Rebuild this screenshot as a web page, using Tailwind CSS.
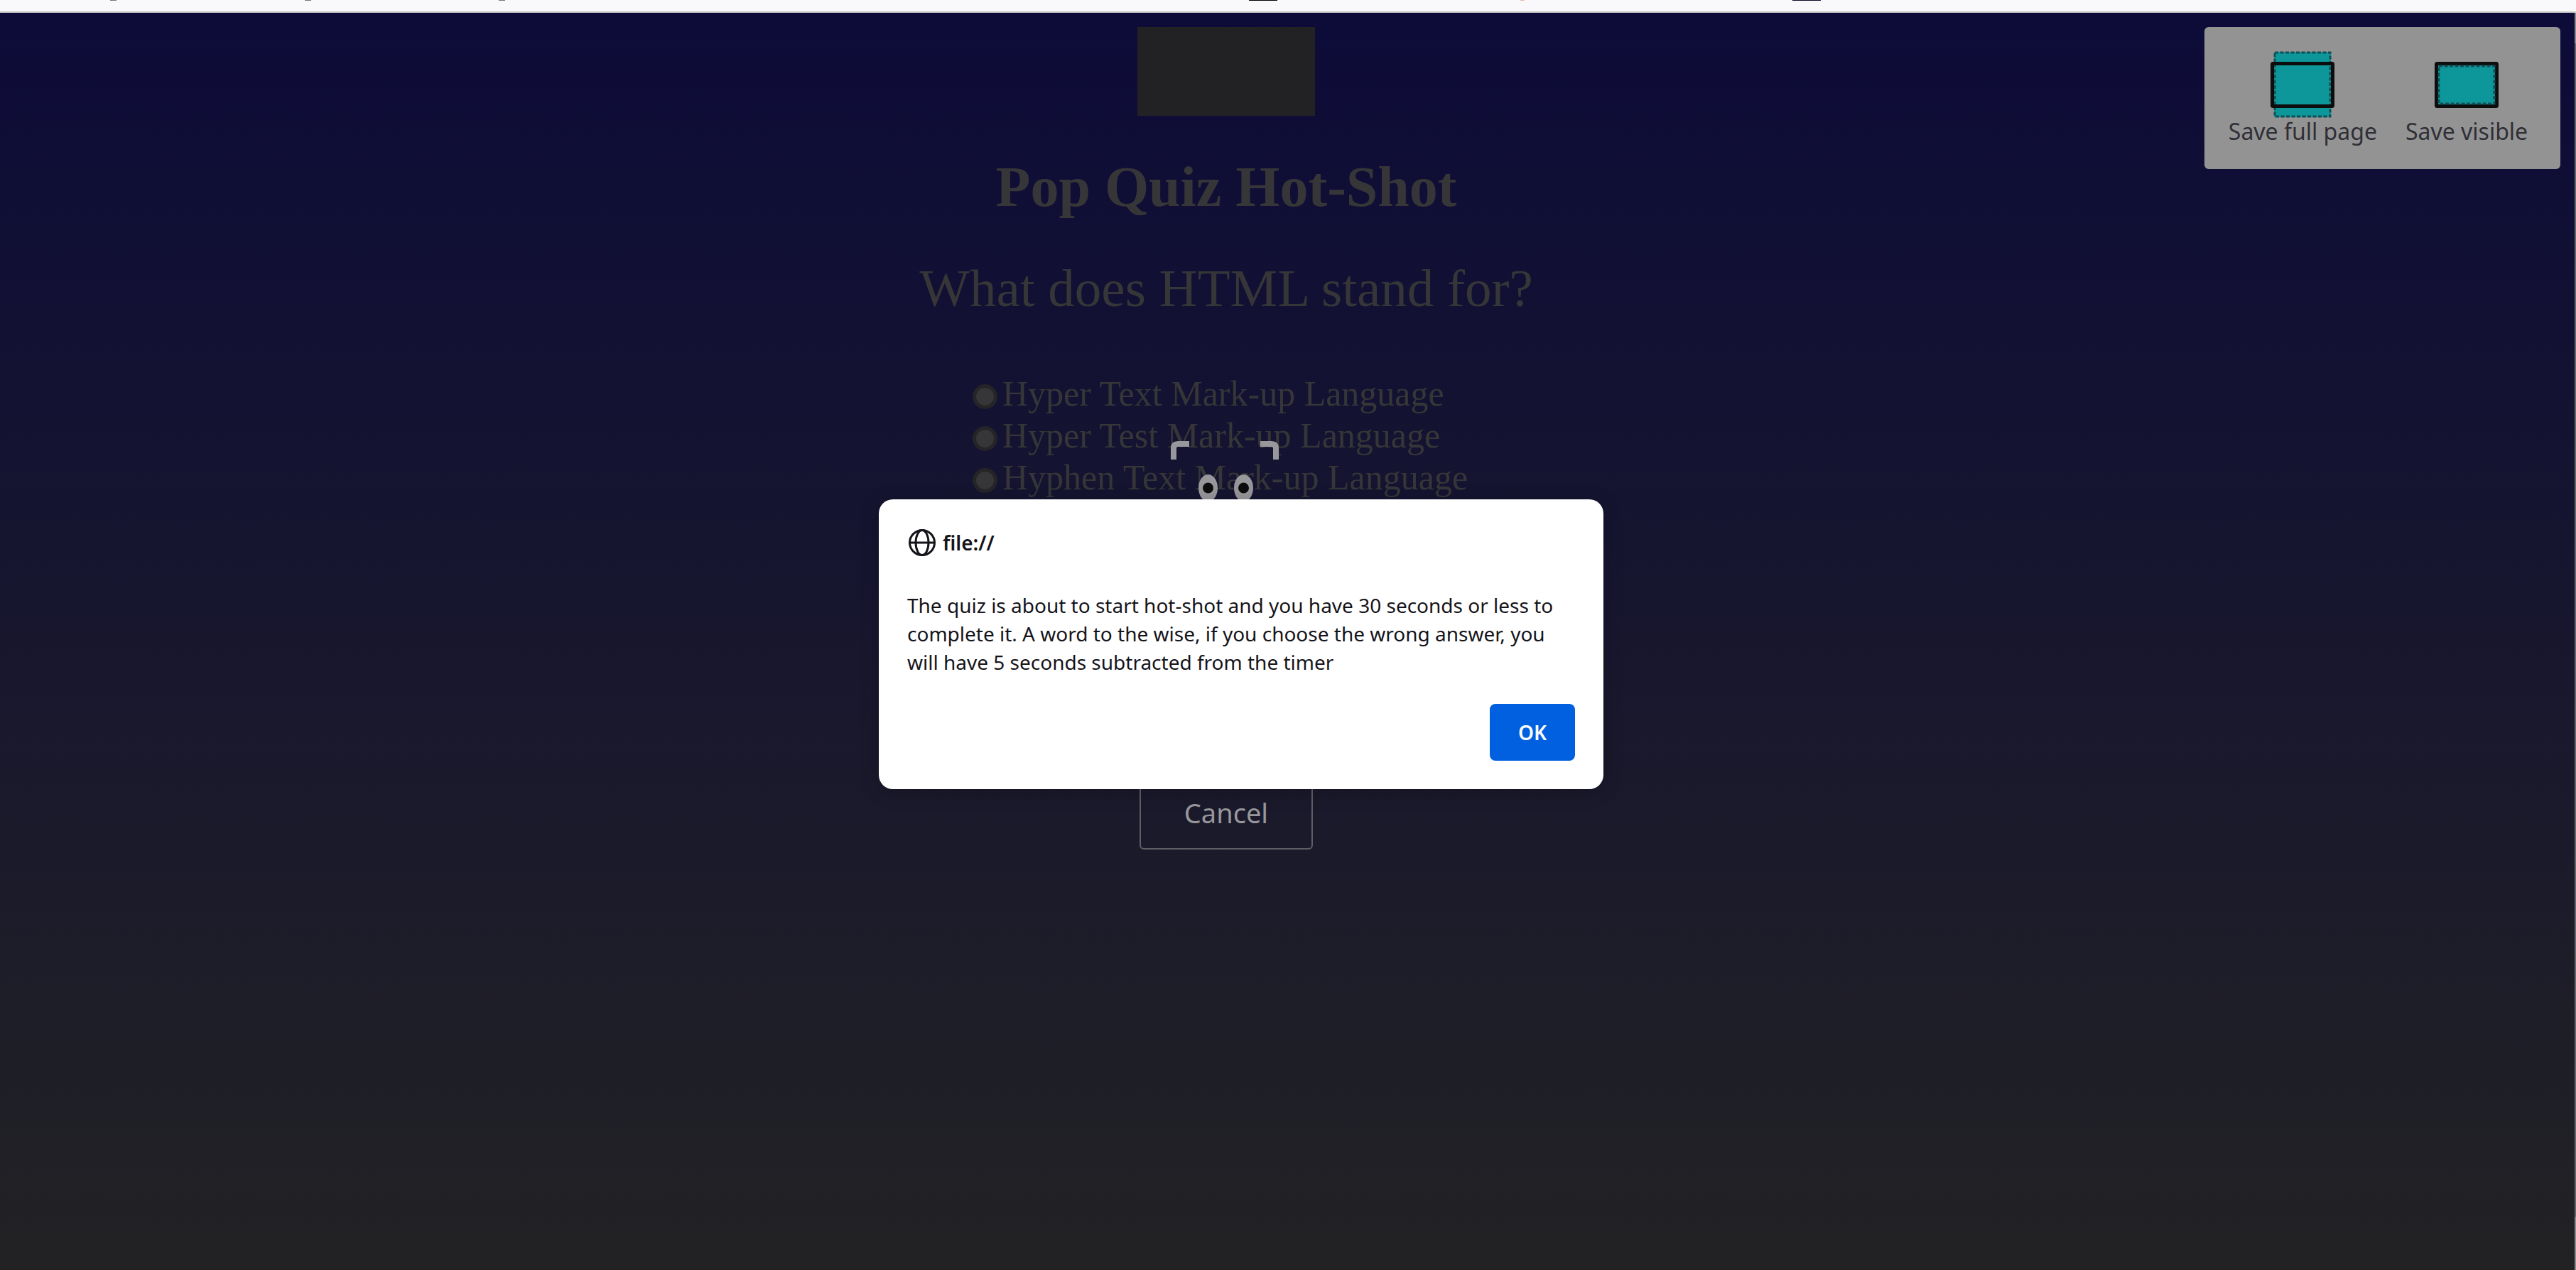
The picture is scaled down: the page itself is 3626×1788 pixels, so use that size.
<!DOCTYPE html>
<html lang="en">
<head>
<meta charset="utf-8">
<title>Pop Quiz Hot-Shot</title>
<script src="https://cdn.jsdelivr.net/npm/@tailwindcss/browser@4"></script>
</head>
<body class="flex min-h-screen flex-col overflow-hidden bg-[#222224]">
  <!-- Bottom edge of the browser toolbar -->
  <header class="h-[18px] shrink-0 border-b-2 border-[#cccccc] bg-[#f9f9fb]">
    <svg class="block h-px w-full" aria-hidden="true">
      <g fill="#77767f"><rect x="155" width="9" height="1"/><rect x="429" width="9" height="1"/><rect x="702" width="9" height="1"/></g>
      <rect x="1758" width="40" height="1" fill="#000"/>
      <rect x="2140" width="6" height="1" fill="#e3bcae"/>
      <rect x="2523" width="40" height="1" fill="#0d0b2a"/>
    </svg>
  </header>

  <div class="relative flex flex-1 bg-[linear-gradient(to_bottom,#0d0b38,#222224)]">
    <main class="flex flex-1 flex-col items-center pt-5 pr-[172px] font-['Liberation_Serif',serif] text-[#363638]">
      <div class="h-[125px] w-[250px] bg-[#222224]"></div>
      <h1 class="mt-[54px] text-[80px] leading-[92px] font-bold">Pop Quiz Hot-Shot</h1>
      <p class="mt-[55px] text-[75px] leading-[84px]">What does HTML stand for?</p>
      <form class="mt-[77px] w-[714px] text-[50px] leading-[59px]">
        <label class="flex items-center gap-[7px]"><input type="radio" name="answer" class="mt-2 size-[35px] appearance-none rounded-full border-[5px] border-[#252429] bg-[#363638]">Hyper Text Mark-up Language</label>
        <label class="flex items-center gap-[7px]"><input type="radio" name="answer" class="mt-2 size-[35px] appearance-none rounded-full border-[5px] border-[#252429] bg-[#363638]">Hyper Test Mark-up Language</label>
        <label class="flex items-center gap-[7px]"><input type="radio" name="answer" class="mt-2 size-[35px] appearance-none rounded-full border-[5px] border-[#252429] bg-[#363638]">Hyphen Text Mark-up Language</label>
      </form>
    </main>
    <div class="flex w-0.5 flex-col bg-[#67676b]" aria-hidden="true">
      <div class="h-[43px] bg-[#8a8a8d]"></div>
      <div class="flex-1"></div>
      <div class="h-[75px] bg-[#8a8a8d]"></div>
    </div>

    <!-- Screenshot tool overlay -->
    <div class="absolute inset-y-0 left-0 right-[174px] flex flex-col items-center pt-[603px] font-['Noto_Sans',sans-serif]">
      <svg class="h-[120px] w-[156px] shrink-0" viewBox="0 0 156 120" aria-hidden="true">
        <path d="M4 26V10Q4 4 10 4H26M126 4H142Q148 4 148 10V26" fill="none" stroke="#98979b" stroke-width="8"/>
        <ellipse cx="52.500" cy="66" rx="13.500" ry="19" fill="#98979b"/><ellipse cx="102.500" cy="66" rx="13.500" ry="19" fill="#98979b"/>
        <circle cx="52.500" cy="66" r="7.500" fill="#0d0d0e"/><circle cx="102.500" cy="66" r="7.500" fill="#0d0d0e"/>
      </svg>
      <button class="mt-[351px] h-[104px] w-[244px] rounded-md border-2 border-[#5f5e65] text-[38px] leading-[52px] text-[#98979b]">Cancel</button>
    </div>
    <div class="absolute top-5 right-[22px] flex h-[200px] w-[501px] justify-center gap-10 rounded-md bg-[#939394] pt-[33px] pr-3 font-['Noto_Sans',sans-serif] text-[32px] leading-[44px] text-[#2f2f35]">
      <button class="flex flex-col items-center whitespace-nowrap">
        <svg class="h-[92px] w-[92px] shrink-0 overflow-visible" viewBox="0 0 92 92" aria-hidden="true">
          <rect x="6" y="2" width="80" height="92" fill="#0d979a"/>
          <rect x="7" y="3" width="78" height="90" fill="none" stroke="#134f55" stroke-width="3" stroke-dasharray="5 2.500"/>
          <rect x="3.500" y="18.500" width="85" height="60" rx="1" fill="none" stroke="#0d0d0e" stroke-width="5"/>
        </svg>
        <span>Save full page</span>
      </button>
      <button class="flex flex-col items-center whitespace-nowrap">
        <svg class="h-[92px] w-[92px] shrink-0" viewBox="0 0 92 92" aria-hidden="true">
          <rect x="3.500" y="18.500" width="85" height="60" rx="1" fill="#0d979a" stroke="#0d0d0e" stroke-width="5"/>
          <rect x="7" y="22" width="78" height="53" fill="none" stroke="#134f55" stroke-width="3" stroke-dasharray="5 2.500"/>
        </svg>
        <span>Save visible</span>
      </button>
    </div>

    <!-- Browser alert -->
    <div class="absolute left-0 right-[132px] top-[685px] flex justify-center font-['Noto_Sans',sans-serif] text-[28px] leading-10 text-[#15141a]">
      <div role="alertdialog" aria-labelledby="origin" aria-describedby="message" class="w-[1020px] rounded-[20px] bg-white p-10 shadow-[0_4px_28px_rgba(0,0,0,0.2)]">
        <div class="flex items-center gap-[10px] pt-px">
          <svg class="ml-0.5 size-[38px]" viewBox="0 0 38 38" fill="none" stroke="#15141a" stroke-width="3" aria-hidden="true">
            <circle cx="19" cy="19" r="17.500"/><ellipse cx="19" cy="19" rx="9" ry="17.500"/><path d="M2 19H36"/>
          </svg>
          <h2 id="origin" class="font-semibold">file://</h2>
        </div>
        <p id="message" class="mt-12">The quiz is about to start hot-shot and you have 30 seconds or less to complete it. A word to the wise, if you choose the wrong answer, you will have 5 seconds subtracted from the timer</p>
        <div class="mt-[39px] flex justify-end">
          <button class="h-20 w-[120px] rounded-lg bg-[#0060df] font-semibold text-[#fbfbfe]">OK</button>
        </div>
      </div>
    </div>
  </div>
</body>
</html>
